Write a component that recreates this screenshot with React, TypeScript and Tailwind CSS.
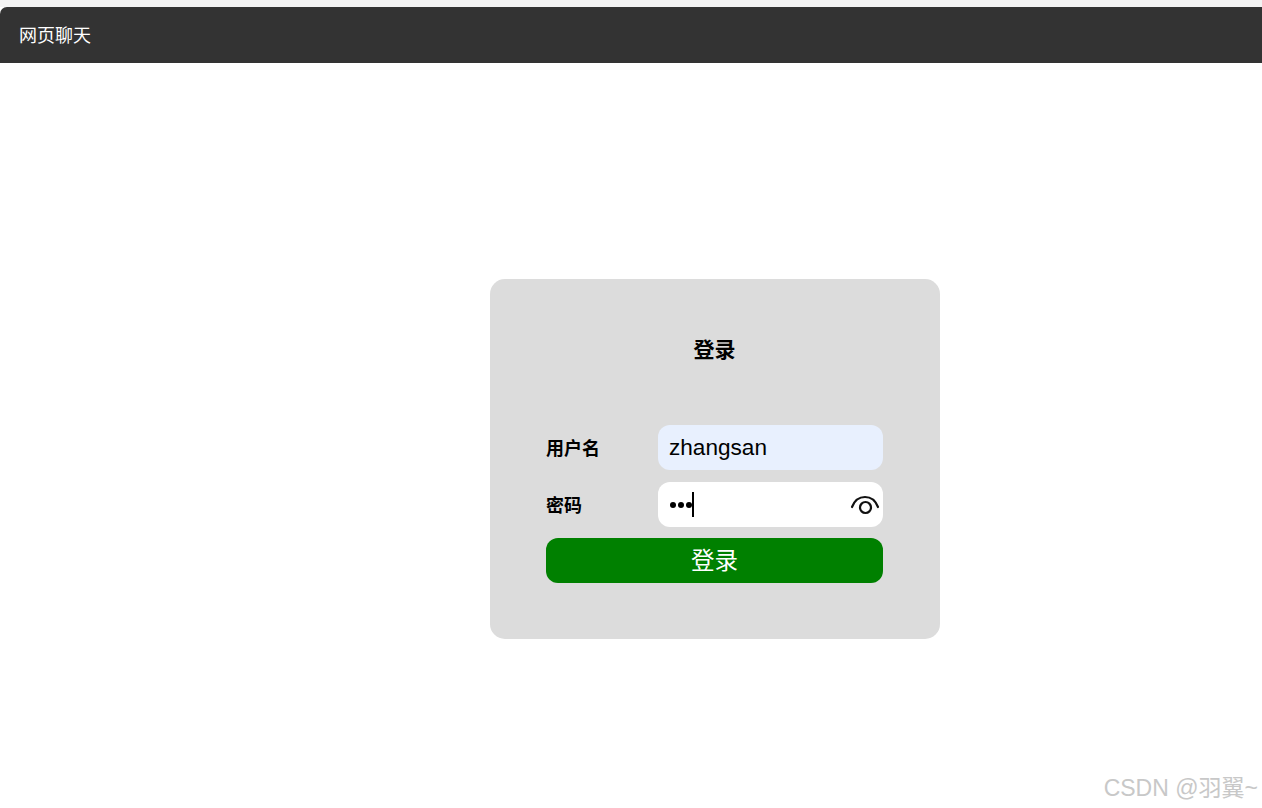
import React from "react";

function Eye() {
  return (
    <svg width="30" height="22" viewBox="0 0 30 22" fill="none" stroke="#111" strokeWidth="2.2" className="shrink-0">
      <path d="M2 13 C4.5 6.5 9.5 3 15 3 C20.5 3 25.5 6.5 28 13" strokeLinecap="round" />
      <circle cx="15.5" cy="13.5" r="5.5" />
    </svg>
  );
}

export default function App() {
  return (
    <div className="relative h-[808px] w-[1262px] overflow-hidden bg-white font-['Liberation_Sans','Noto_Sans_CJK_SC',sans-serif]">
      <div className="h-[7px] bg-[#f3f3f3]" />
      <header className="flex h-[56px] items-center rounded-tl-[7px] bg-[#333333] pl-[19px] pt-[2px] text-[18px] text-white">
        网页聊天
      </header>
      <main className="ml-[490px] mt-[216px] h-[360px] w-[450px] rounded-[15px] bg-[#dcdcdc] pl-[56px] pt-[46px]">
        <div className="w-[337px]">
          <h1 className="flex h-[50px] items-center justify-center text-[21px] font-bold text-black">登录</h1>
          <div className="mt-[50px] flex h-[45px] items-center">
            <label className="w-[112px] pt-[3px] text-[18px] font-bold text-black">用户名</label>
            <div className="flex h-[45px] w-[225px] items-center rounded-[12px] bg-[#e8f0fe] pl-[11px] text-[22.6px] text-black">
              zhangsan
            </div>
          </div>
          <div className="mt-[12px] flex h-[45px] items-center">
            <label className="w-[112px] pt-[3px] text-[18px] font-bold text-black">密码</label>
            <div className="flex h-[45px] w-[225px] items-center rounded-[12px] bg-white pl-[12px] pr-[3px]">
              <span className="flex items-center gap-[2px]">
                <i className="block h-[6px] w-[6px] rounded-full bg-black" />
                <i className="block h-[6px] w-[6px] rounded-full bg-black" />
                <i className="block h-[6px] w-[6px] rounded-full bg-black" />
              </span>
              <span className="block h-[25px] w-[2px] bg-black" />
              <span className="ml-auto flex"><Eye /></span>
            </div>
          </div>
          <button className="mt-[11px] flex h-[45px] w-[337px] items-center justify-center rounded-[12px] bg-[#008000] pt-[3px] text-[23.5px] text-white">
            登录
          </button>
        </div>
      </main>
      <div className="absolute bottom-[5px] right-[4px] text-[23px] leading-[30px] text-[#c8c8c8]">CSDN @羽翼~</div>
    </div>
  );
}
